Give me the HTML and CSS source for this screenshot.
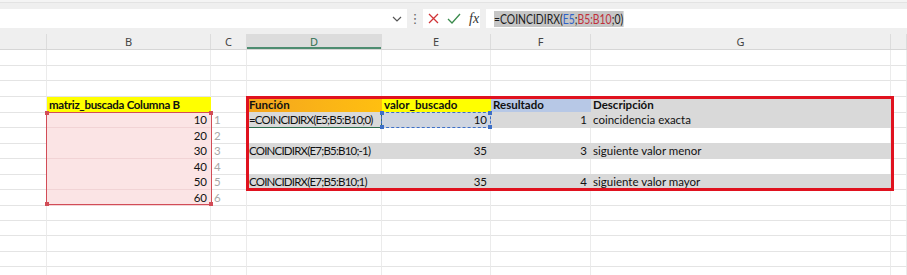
FILE: index.html
```html
<!DOCTYPE html>
<html lang="es">
<head>
<meta charset="utf-8">
<title>COINCIDIRX</title>
<link rel="stylesheet" href="styles.css">
</head>
<body>
<div class="topstrip"></div>
<div class="fbar">
  <div class="namebox">
    <svg class="chev" width="10" height="6" viewBox="0 0 10 6"><path d="M1 1 L5 5 L9 1" fill="none" stroke="#555" stroke-width="1.2"/></svg>
  </div>
  <div class="dots">⋮</div>
  <div class="fbtns">
    <svg class="ico" width="11" height="11" viewBox="0 0 11 11"><path d="M1 1 L10 10 M10 1 L1 10" stroke="#d13438" stroke-width="1.3" fill="none"/></svg>
    <svg class="ico" width="14" height="11" viewBox="0 0 14 11"><path d="M1 6 L5 10 L13 1" stroke="#3a8a4c" stroke-width="1.3" fill="none"/></svg>
    <span class="fx">fx</span>
  </div>
  <div class="finput"><span class="sel">=COINCIDIRX(<span class="ref1">E5</span>;<span class="ref2">B5:B10</span>;0)</span></div>
</div>
<div class="colheads">
  <div class="ch"></div>
  <div class="ch">B</div>
  <div class="ch">C</div>
  <div class="ch ch-active">D</div>
  <div class="ch">E</div>
  <div class="ch">F</div>
  <div class="ch">G</div>
  <div class="ch"></div>
</div>
<div class="sheet">
  <div class="cells">
    <div class="row"><div class="c"></div><div class="c"></div><div class="c"></div><div class="c"></div><div class="c"></div><div class="c"></div><div class="c"></div><div class="c"></div></div>
    <div class="row"><div class="c"></div><div class="c"></div><div class="c"></div><div class="c"></div><div class="c"></div><div class="c"></div><div class="c"></div><div class="c"></div></div>
    <div class="row"><div class="c"></div><div class="c"></div><div class="c"></div><div class="c"></div><div class="c"></div><div class="c"></div><div class="c"></div><div class="c"></div></div>
    <div class="row"><div class="c"></div><div class="c yellow b tight">matriz_buscada Columna B</div><div class="c"></div><div class="c orange b">Función</div><div class="c yellow b">valor_buscado</div><div class="c blue b">Resultado</div><div class="c gray b">Descripción</div><div class="c"></div></div>
    <div class="row"><div class="c"></div><div class="c pink num">10</div><div class="c idx">1</div><div class="c gray f">=COINCIDIRX(E5;B5:B10;0)</div><div class="c bluegray num">10</div><div class="c gray num">1</div><div class="c gray">coincidencia exacta</div><div class="c"></div></div>
    <div class="row"><div class="c"></div><div class="c pink num">20</div><div class="c idx">2</div><div class="c"></div><div class="c"></div><div class="c"></div><div class="c"></div><div class="c"></div></div>
    <div class="row"><div class="c"></div><div class="c pink num">30</div><div class="c idx">3</div><div class="c gray f">COINCIDIRX(E7;B5:B10;-1)</div><div class="c gray num">35</div><div class="c gray num">3</div><div class="c gray">siguiente valor menor</div><div class="c"></div></div>
    <div class="row"><div class="c"></div><div class="c pink num">40</div><div class="c idx">4</div><div class="c"></div><div class="c"></div><div class="c"></div><div class="c"></div><div class="c"></div></div>
    <div class="row"><div class="c"></div><div class="c pink num">50</div><div class="c idx">5</div><div class="c gray f">COINCIDIRX(E7;B5:B10;1)</div><div class="c gray num">35</div><div class="c gray num">4</div><div class="c gray">siguiente valor mayor</div><div class="c"></div></div>
    <div class="row"><div class="c"></div><div class="c pink num">60</div><div class="c idx">6</div><div class="c"></div><div class="c"></div><div class="c"></div><div class="c"></div><div class="c"></div></div>
    <div class="row"><div class="c"></div><div class="c"></div><div class="c"></div><div class="c"></div><div class="c"></div><div class="c"></div><div class="c"></div><div class="c"></div></div>
    <div class="row"><div class="c"></div><div class="c"></div><div class="c"></div><div class="c"></div><div class="c"></div><div class="c"></div><div class="c"></div><div class="c"></div></div>
    <div class="row"><div class="c"></div><div class="c"></div><div class="c"></div><div class="c"></div><div class="c"></div><div class="c"></div><div class="c"></div><div class="c"></div></div>
    <div class="row"><div class="c"></div><div class="c"></div><div class="c"></div><div class="c"></div><div class="c"></div><div class="c"></div><div class="c"></div><div class="c"></div></div>
    <div class="row"><div class="c"></div><div class="c"></div><div class="c"></div><div class="c"></div><div class="c"></div><div class="c"></div><div class="c"></div><div class="c"></div></div>
  </div>
  <div class="marks">
    <div class="rng rng-b"><span class="h tl"></span><span class="h tr"></span><span class="h bl"></span><span class="h br"></span></div>
    <div class="active"></div>
    <div class="rng rng-e"><span class="h tl"></span><span class="h tr"></span><span class="h bl"></span><span class="h br"></span></div>
    <div class="redbox"></div>
  </div>
</div>
</body>
</html>
```
FILE: styles.css
```css
* { box-sizing: border-box; }
html, body { margin: 0; padding: 0; }
body {
  width: 907px;
  height: 275px;
  overflow: hidden;
  background: #ffffff;
  font-family: Lato, "Liberation Sans", sans-serif;
}

.topstrip {
  height: 9px;
  background: linear-gradient(#f4f4f4 0 2px, #e3e3e3 2px 3px, #efefef 3px);
}

.fbar {
  height: 19px;
  display: flex;
  background: #efefef;
}
.namebox {
  width: 407px;
  background: #fff;
  display: flex;
  align-items: center;
  justify-content: flex-end;
  padding-right: 5px;
}
.dots {
  width: 16px;
  text-align: center;
  font-size: 13px;
  line-height: 19px;
  color: #666;
  font-family: "DejaVu Sans", sans-serif;
}
.fbtns {
  width: 57px;
  background: #fff;
  display: flex;
  align-items: center;
  padding-left: 5px;
  gap: 8px;
}
.fx {
  font-family: "Liberation Serif", serif;
  font-style: italic;
  font-size: 14px;
  color: #333;
  line-height: 19px;
}
.finput {
  flex: 1;
  margin-left: 6px;
  background: #fff;
  padding-left: 8px;
  display: flex;
  align-items: center;
}
.sel {
  display: inline-block;
  background: #c6c6c6;
  font-family: Lato, sans-serif;
  font-size: 13px;
  line-height: 16px;
  color: #1a1a1a;
  transform: scaleX(0.8);
  transform-origin: left center;
  white-space: nowrap;
}
.ref1 { color: #2f62c7; }
.ref2 { color: #c0303a; }

.colheads, .row, .marks {
  display: grid;
  grid-template-columns: 47px 164px 36px 135px 109px 100px 300px 16px;
}
.colheads {
  height: 22px;
  background: #efefef;
  align-items: end;
  border-bottom: 1px solid #d6d6d6;
}
.ch {
  height: 15px;
  border-right: 1px solid #dcdcdc;
  text-align: center;
  font-family: "Noto Sans", sans-serif;
  font-size: 11px;
  line-height: 15px;
  color: #444;
}
.ch-active {
  background: #dcdcdc;
  color: #2f6f52;
  box-shadow: inset 0 -2px 0 #4d8c70;
}

.sheet {
  display: grid;
}
.cells, .marks { grid-area: 1 / 1; }
.row { height: 15.5px; }
.c {
  border-right: 1px solid #ebebeb;
  border-bottom: 1px solid #e4e4e4;
  font-size: 11.5px;
  line-height: 15px;
  padding: 0 2px;
  color: #111;
  white-space: nowrap;
}
.b { font-weight: bold; }
.tight { letter-spacing: -0.3px; }
.f { letter-spacing: -0.8px; }
.num { text-align: right; padding-right: 3px; }
.idx { color: #a8a8a8; padding-left: 3px; }
.yellow { background: #ffff00; border-color: #ffff00; }
.orange { background: linear-gradient(90deg, #f4a51f, #ffbf10); border-color: #ffbf10; }
.blue { background: #b7c8e6; border-color: #b7c8e6; }
.gray { background: #d9d9d9; border-color: #d9d9d9; }
.bluegray { background: #cfd5e0; border-color: #cfd5e0; }
.pink { background: #fbe4e5; border-right-color: #fbe4e5; border-bottom-color: #f1d3d5; }

.marks {
  grid-template-rows: repeat(15, 15.5px);
  pointer-events: none;
}
.rng { position: relative; }
.rng-b {
  grid-column: 2;
  grid-row: 5 / 11;
  border: 1px solid #d24c57;
  margin: 0 -1px 0 -1px;
}
.rng-e {
  grid-column: 5;
  grid-row: 5;
  border: 1px dashed #3d6fc6;
  margin-left: -1px;
}
.h {
  position: absolute;
  width: 4px;
  height: 4px;
}
.rng-b .h { background: #d24c57; }
.rng-e .h { background: #3d6fc6; }
.tl { left: -2px; top: -2px; }
.tr { right: -2px; top: -2px; }
.bl { left: -2px; bottom: -2px; }
.br { right: -2px; bottom: -2px; }
.active {
  grid-column: 4;
  grid-row: 5;
  border-bottom: 1px solid #2c6b4c;
  border-right: 1px solid #2c6b4c;
}
.redbox {
  grid-column: 4 / 8;
  grid-row: 4 / 10;
  border: 3px solid #e0121f;
  margin: -1px -3px -1px -1px;
}
```
